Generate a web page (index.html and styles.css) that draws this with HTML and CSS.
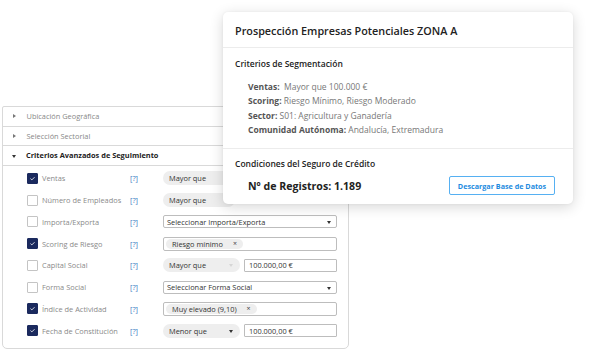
FILE: index.html
```html
<!DOCTYPE html>
<html lang="es">
<head>
<meta charset="utf-8">
<link rel="stylesheet" href="styles.css">
</head>
<body>
<div class="stage">
  <div class="panel">
    <div class="acc-row"><span class="tri-right"></span>Ubicación Geográfica</div>
    <div class="acc-row"><span class="tri-right"></span>Selección Sectorial</div>
    <div class="acc-row open"><span class="tri-down"></span>Criterios Avanzados de Seguimiento</div>
    <div class="criteria">
      <div class="crow">
        <span class="cb checked"><svg viewBox="0 0 11 11"><path d="M3 5.6 L4.7 7.2 L8 3.9" fill="none" stroke="#fff" stroke-width="1"/></svg></span>
        <span class="lbl">Ventas</span><span class="help">[?]</span>
        <div class="ctrl"><span class="pill">Mayor que</span></div>
      </div>
      <div class="crow">
        <span class="cb"></span>
        <span class="lbl">Número de Empleados</span><span class="help">[?]</span>
        <div class="ctrl"><span class="pill">Mayor que</span></div>
      </div>
      <div class="crow">
        <span class="cb"></span>
        <span class="lbl">Importa/Exporta</span><span class="help">[?]</span>
        <div class="ctrl"><span class="select">Seleccionar Importa/Exporta<span class="arr"></span></span></div>
      </div>
      <div class="crow">
        <span class="cb checked"><svg viewBox="0 0 11 11"><path d="M3 5.6 L4.7 7.2 L8 3.9" fill="none" stroke="#fff" stroke-width="1"/></svg></span>
        <span class="lbl">Scoring de Riesgo</span><span class="help">[?]</span>
        <div class="ctrl"><span class="tags"><span class="tag">Riesgo mínimo<span class="x">×</span></span></span></div>
      </div>
      <div class="crow">
        <span class="cb"></span>
        <span class="lbl">Capital Social</span><span class="help">[?]</span>
        <div class="ctrl"><span class="pill sel">Mayor que<span class="arr light"></span></span><span class="input">100.000,00 €</span></div>
      </div>
      <div class="crow">
        <span class="cb"></span>
        <span class="lbl">Forma Social</span><span class="help">[?]</span>
        <div class="ctrl"><span class="select">Seleccionar Forma Social<span class="arr"></span></span></div>
      </div>
      <div class="crow">
        <span class="cb checked"><svg viewBox="0 0 11 11"><path d="M3 5.6 L4.7 7.2 L8 3.9" fill="none" stroke="#fff" stroke-width="1"/></svg></span>
        <span class="lbl">Índice de Actividad</span><span class="help">[?]</span>
        <div class="ctrl"><span class="tags"><span class="tag">Muy elevado (9,10)<span class="x">×</span></span></span></div>
      </div>
      <div class="crow">
        <span class="cb checked"><svg viewBox="0 0 11 11"><path d="M3 5.6 L4.7 7.2 L8 3.9" fill="none" stroke="#fff" stroke-width="1"/></svg></span>
        <span class="lbl">Fecha de Constitución</span><span class="help">[?]</span>
        <div class="ctrl"><span class="pill sel">Menor que<span class="arr"></span></span><span class="input">100.000,00 €</span></div>
      </div>
    </div>
  </div>

  <div class="card">
    <div class="card-head">Prospección Empresas Potenciales ZONA A</div>
    <div class="card-sec">
      <div class="sec-title">Criterios de Segmentación</div>
      <ul class="crit-list">
        <li><b>Ventas:</b>&nbsp; Mayor que 100.000 €</li>
        <li><b>Scoring:</b> Riesgo Mínimo, Riesgo Moderado</li>
        <li><b>Sector:</b> S01: Agricultura y Ganadería</li>
        <li><b>Comunidad Autónoma:</b> Andalucía, Extremadura</li>
      </ul>
    </div>
    <div class="card-sec last">
      <div class="sec-title">Condiciones del Seguro de Crédito</div>
      <div class="reg-row">
        <span class="reg">Nº de Registros: 1.189</span>
        <span class="btn">Descargar Base de Datos</span>
      </div>
    </div>
  </div>
</div>
</body>
</html>
```

FILE: styles.css
```css
* { box-sizing: border-box; }
html, body { margin: 0; padding: 0; background: #fff; }
body { font-family: "Open Sans", "Noto Sans", sans-serif; width: 596px; height: 350px; overflow: hidden; }
.stage { position: relative; width: 596px; height: 350px; padding: 106px 0 0 2px; }

.panel {
  width: 347px;
  border: 1px solid #d9d9d9;
  border-radius: 2px 2px 5px 5px;
  background: #fff;
  padding-bottom: 6px;
}
.acc-row {
  height: 19.5px;
  display: flex;
  align-items: center;
  padding-left: 24px;
  font-size: 7.4px;
  color: #888;
  border-bottom: 1px solid #d9d9d9;
  position: relative;
}
.acc-row.open { color: #222; font-weight: 700; }
.tri-right {
  width: 0; height: 0;
  border-left: 3.5px solid #777;
  border-top: 2.5px solid transparent;
  border-bottom: 2.5px solid transparent;
  margin-left: -14px; margin-right: 10.5px;
}
.tri-down {
  width: 0; height: 0;
  border-top: 3px solid #333;
  border-left: 2.5px solid transparent;
  border-right: 2.5px solid transparent;
  margin-left: -15px; margin-right: 10px;
  margin-top: 2px;
}

.criteria { padding-top: 2px; }
.crow {
  height: 21.75px;
  display: flex;
  align-items: center;
  padding-left: 24px;
  font-size: 7.4px;
}
.cb {
  width: 11px; height: 11px;
  border: 1px solid #c4c4c4;
  border-radius: 1px;
  background: #fff;
  flex: none;
  display: block;
}
.cb.checked { background: #1b2a5e; border-color: #1b2a5e; }
.cb svg { display: block; width: 9px; height: 9px; }
.lbl { width: 92px; padding-left: 4px; color: #8a8a8a; }
.help { width: 33px; color: #3a78c2; }
.ctrl { display: flex; align-items: center; width: 174px; }
.pill {
  display: flex; align-items: center;
  height: 14px;
  width: 72px;
  padding-left: 6px;
  border-radius: 7px;
  background: #eeeeee;
  color: #333;
  position: relative;
}
.pill.sel { width: 77px; }
.select {
  display: flex; align-items: center;
  width: 174px; height: 13px;
  border: 1px solid #bdbdbd;
  border-radius: 2px;
  padding-left: 3px;
  color: #333;
  position: relative;
}
.arr {
  position: absolute;
  right: 5px; top: 5px;
  width: 0; height: 0;
  border-top: 3px solid #333;
  border-left: 2.5px solid transparent;
  border-right: 2.5px solid transparent;
}
.pill .arr { right: 7px; top: 6px; }
.arr.light { border-top-color: #d6d6d6; }
.tags {
  display: flex; align-items: center;
  width: 174px; height: 14px;
  border: 1px solid #bdbdbd;
  border-radius: 2px;
  padding-left: 2px;
}
.tag {
  display: flex; align-items: center;
  height: 10px;
  padding: 0 6px 0 6px;
  background: #eeeeee;
  border-radius: 5px;
  color: #333;
}
.tag .x { margin-left: 10px; font-size: 7px; color: #444; }
.input {
  display: flex; align-items: center;
  margin-left: 4px;
  width: 93px; height: 13px;
  border: 1px solid #bdbdbd;
  border-radius: 1px;
  padding-left: 4px;
  color: #333;
}

.card {
  position: absolute;
  left: 223px; top: 12px;
  width: 350px; height: 192px;
  background: #fff;
  border-radius: 5px;
  box-shadow: 0 3px 14px rgba(0,0,0,0.16), 0 0 3px rgba(0,0,0,0.05);
  display: flex; flex-direction: column;
}
.card-head {
  height: 36px;
  padding: 11px 0 0 12px;
  font-size: 10.8px;
  font-weight: 600;
  color: #222;
  border-bottom: 1px solid #ececec;
}
.card-sec {
  padding: 9px 0 0 12px;
  height: 101px;
  border-bottom: 1px solid #ececec;
}
.card-sec.last { border-bottom: none; height: auto; flex: 1; padding-top: 8px; }
.sec-title { font-size: 8.5px; font-weight: 600; color: #222; line-height: 14px; }
.crit-list {
  list-style: none;
  margin: 9px 0 0 0;
  padding: 0 0 0 13px;
  font-size: 8.5px;
  line-height: 14.4px;
  color: #777;
}
.crit-list b { color: #555; font-weight: 700; }
.reg-row {
  display: flex; align-items: center; justify-content: space-between;
  padding: 5px 18px 0 13px;
}
.reg { font-size: 10.6px; font-weight: 700; color: #222; }
.btn {
  display: flex; align-items: center; justify-content: center;
  width: 106px; height: 19px;
  border: 1.5px solid #56b0f2;
  border-radius: 2px;
  color: #1d8be0;
  font-size: 7.2px;
  font-weight: 700;
}
```
